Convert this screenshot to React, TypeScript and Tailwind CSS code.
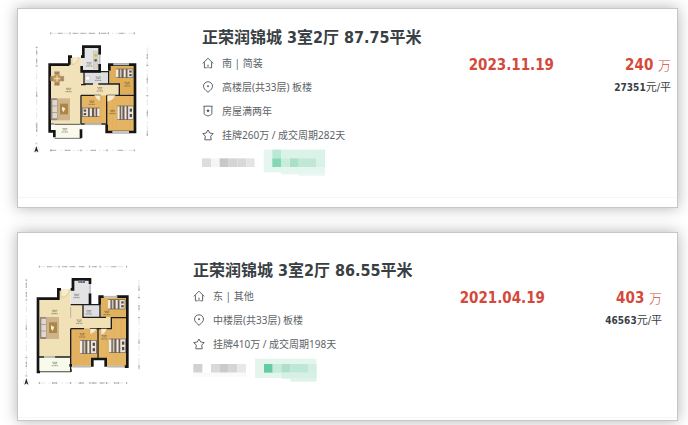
import type { ReactNode } from 'react';

type IconName = 'home' | 'pin' | 'badge' | 'star';
type Block = [number, number, number, number, string];

interface Listing {
  title: string;
  facts: { icon: IconName; text: string }[];
  date: string;
  price: string;
  unitPrice: string;
  plan: ReactNode;
  tags: Block[];
  cardClass: string;
  bodyClass: string;
}

const iconPaths: Record<IconName, ReactNode> = {
  home: <path d="M.8 6.400 6 1.200l5.200 5.200M2.400 5.200v5.600h2.300M9.600 5.200v5.600H7.300M6 7.600v3.600" />,
  pin: (
    <>
      <path d="M6 11.300C3.200 9 1.500 7.300 1.500 5.100a4.500 4.300 0 0 1 9 0C10.500 7.300 8.800 9 6 11.300Z" />
      <circle cx="6" cy="5.200" r=".6" fill="currentColor" />
    </>
  ),
  badge: (
    <>
      <path d="M1.500 1.200h9M2.100 1.200v7.300c0 1.200 1.900 1.600 3.900 2.600 2-1 3.900-1.400 3.900-2.600V1.200" />
      <path d="m6 3.600.6 1.300 1.300.2-1 .9.300 1.300L6 6.700l-1.200.6L5.100 6l-1-.9 1.300-.2Z" fill="currentColor" stroke="none" />
    </>
  ),
  star: <path d="m6 1 1.700 3 3.500.6-2.500 2.500.5 3.700H2.800l.5-3.700L.8 4.600 4.300 4Z" />,
};

function Icon({ name }: { name: IconName }) {
  return (
    <svg viewBox="0 0 12 12" className="size-3 shrink-0" fill="none" stroke="currentColor" strokeWidth="1" strokeLinejoin="round" aria-hidden="true">
      {iconPaths[name]}
    </svg>
  );
}

// Double bed seen from above, head on the left unless flipped
function Bed({ x, y, w, h, flip }: { x: number; y: number; w: number; h: number; flip?: boolean }) {
  return (
    <g transform={flip ? `translate(${x + w} ${y}) scale(-1 1)` : `translate(${x} ${y})`}>
      <rect width={w} height={h} fill="#6a5c50" />
      <rect x="2" y="2" width={w * 0.3} height={h - 4} fill="#e9e4dc" />
      <rect x="5" y={h * 0.2} width={w * 0.14} height={h * 0.22} fill="#554c48" />
      <rect x="5" y={h * 0.58} width={w * 0.14} height={h * 0.22} fill="#554c48" />
      <rect x={w * 0.44} y="2" width={w * 0.12} height={h - 4} fill="#f1ece5" />
      <rect x={w * 0.68} y="2" width={w * 0.1} height={h - 4} fill="#cfc4b8" />
      <rect x={w * 0.86} y="2" width={w * 0.14} height={h - 4} fill="#f1ece5" />
    </g>
  );
}

function Sofa({ x, y }: { x: number; y: number }) {
  return (
    <g transform={`translate(${x} ${y})`}>
      <rect x="18" y="0" width="40" height="66" fill="#cdb48d" />
      <rect width="20" height="66" rx="4" fill="#93857a" />
      <rect x="5" y="5" width="14" height="17" fill="#e0d8cf" />
      <rect x="5" y="24" width="14" height="17" fill="#e0d8cf" />
      <rect x="5" y="43" width="14" height="17" fill="#e0d8cf" />
      <rect x="28" y="16" width="24" height="32" fill="#ad8544" />
      <path d="m34 25 10 5-5 12-5-7Z" fill="#f3ead3" />
    </g>
  );
}

// Room name and area, too small to be read
function RoomMark({ x, y }: { x: number; y: number }) {
  return <path d={`M${x - 8} ${y}h16M${x - 6} ${y + 4}h12M${x - 10} ${y + 10}h20`} stroke="#3a342c" strokeWidth="2" strokeDasharray="4 1" opacity=".7" />;
}

function Compass({ x, y }: { x: number; y: number }) {
  return (
    <g transform={`translate(${x} ${y})`}>
      <circle r="9" fill="none" stroke="#ccc" />
      <path d="M0-11 6 8 0 4-6 8Z" fill="#222" />
      <path d="M-2-16v-5l4 5v-5" stroke="#999" fill="none" />
    </g>
  );
}

function PlanOne() {
  return (
    <svg viewBox="90 84 372 390" className="w-full" role="img" aria-label="户型图">
      <g stroke="#ccc" strokeWidth="1.500" fill="none">
        <path d="M152 100h251M152 451h251M110 142v268M442 142v268" strokeDasharray="18 10 5 6" />
        <path d="M173 100h16M218 100h16M242 100h16M266 100h18M303 100h16M358 100h16M153 451h14M195 451h17M273 451h16M355 451h16M110 152v14M110 176v14M110 277v14M110 374v22M442 162v16M442 233v16M442 332v16M442 394v14" stroke="#aaa" strokeWidth="4" strokeDasharray="3 1" />
        <path d="M152 97v6M210 97v6M298 97v6M325 97v6M403 97v6M152 448v6M243 448v6M321 448v6M403 448v6M107 142h6M107 198h6M107 372h6M439 196h6M439 287h6" stroke="#777" strokeWidth="2" />
      </g>
      <path d="M149 194h60v-22h36v42h84v72h-86v86h-94Z" fill="#f2e2b9" />
      <path d="M243 254h114v31H243Z" fill="#f2e2b9" />
      <path d="M250 140h49v74h-54v-42h5Z" fill="#e4e3e5" />
      <path d="M252 216h74v36h-74Z" fill="#dedee0" />
      <path d="M329 194h76v90h-47v-31h-29Z" fill="#e1ae58" />
      <path d="M320 286h85v108h-85Z" fill="#e4b462" />
      <path d="M244 286h76v84h-76Z" fill="#e6b665" />
      <path d="M162 373h82v40h-82Z" fill="#f9faec" />
      <path d="M338 296v98M350 296v98M390 286v108M256 348v24M304 286v84M390 240v44" stroke="#cf9846" opacity=".4" />
      <path d="M252 215h76M252 216v36h27M295 252h63v33M326 216v36M243 286h58M320 286v106M322 286h82M243 254h14M243 372h76M358 254v32" fill="none" stroke="#1d1d1d" strokeWidth="4" />
      <path d="M164 415h80" stroke="#6e7272" strokeWidth="3" />
      <path d="M149 372h14M164 373h78" stroke="#555" strokeWidth="3" />
      <path d="M243 170h7v-30h49v24M299 192v22h-54v-16M208 194v-24h8M208 194h-59v200h14v18M328 212v-18h77v202h-85v-22M243 388v26" fill="none" stroke="#151515" strokeWidth="8" />
      <path d="M243 286v86" stroke="#1d1d1d" strokeWidth="4" />
      <path d="M299 164v28M340 193h47M337 396h50M254 373h50" stroke="#d5d5d5" strokeWidth="6" />
      <path d="M299 164v28M340 193h47M337 396h50M254 373h50" stroke="#777" strokeWidth="1" />
      <path d="M216 172v22q18-4 20-22M301 286v18q-12-3-18-18M322 286v19q19-2 24-19" fill="#f7ebcb" stroke="#b99761" />
      <rect x="280" y="155" width="13" height="50" fill="#d9d4bd" stroke="#aaa" />
      <circle cx="287" cy="166" r="4" fill="#d8b847" />
      <circle cx="287" cy="181" r="4" fill="#5d6158" />
      <path d="M257 229h12v11h-12Z" fill="#fff" stroke="#aaa" />
      <g fill="#c89a55" stroke="#8d7143">
        <circle cx="171" cy="236" r="13" />
        <path d="M164 215h14v7h-14ZM164 249h14v7h-14ZM151 229h7v14h-7ZM184 229h7v14h-7Z" fill="#9a8970" />
      </g>
      <path d="M171 227v18M162 236h18" stroke="#eee2c7" strokeWidth="3" />
      <Sofa x={152} y={295} />
      <Bed x={348} y={206} w={52} h={28} flip />
      <Bed x={352} y={317} w={49} h={43} flip />
      <Bed x={246} y={323} w={53} h={28} />
      <RoomMark x={206} y={265} />
      <RoomMark x={268} y={188} />
      <RoomMark x={295} y={231} />
      <RoomMark x={300} y={263} />
      <RoomMark x={276} y={303} />
      <RoomMark x={338} y={331} />
      <RoomMark x={382} y={248} />
      <RoomMark x={195} y={386} />
      <Compass x={109} y={449} />
    </svg>
  );
}

function PlanTwo() {
  return (
    <svg viewBox="63 123 372 390" className="w-full" role="img" aria-label="户型图">
      <g stroke="#ccc" strokeWidth="1.500" fill="none">
        <path d="M118 140h262M118 489h262M79 180v290M417 180v270" strokeDasharray="18 10 5 6" />
        <path d="M141 140h14M187 140h14M211 140h14M238 140h16M277 140h14M334 140h16M156 489h16M236 489h16M275 489h14M299 489h14M342 489h16M79 189v14M79 216v14M79 316v16M79 426v16M417 199v14M417 255v14M417 358v14M417 434v14" stroke="#aaa" strokeWidth="4" strokeDasharray="3 1" />
        <path d="M118 137v6M177 137v6M269 137v6M300 137v6M380 137v6M118 486v6M212 486v6M270 486v6M320 486v6M380 486v6M76 180h6M76 240h6M76 412h6M414 233h6M414 293h6" stroke="#777" strokeWidth="2" />
      </g>
      <path d="M115 236h61v-28h36v46h37v38h84v33H212v85h-97Z" fill="#f1e1b7" />
      <path d="M213 178h56v75h-56Z" fill="#e3e2e4" />
      <path d="M250 255h50v37h-50Z" fill="#dedddf" />
      <path d="M302 231h79v61h-79Z" fill="#e2b15d" />
      <path d="M333 292h48v147h-64v-23h-23v-91h39Z" fill="#e4b565" />
      <path d="M212 325h81v91h-16v23h-65Z" fill="#e3b260" />
      <path d="M118 411h95v44h-95Z" fill="#f8faeb" />
      <path d="M228 328v112M254 405v35M343 298v52M363 294v60M320 328v88M350 402v36" stroke="#cf9846" opacity=".4" />
      <path d="M212 254h37v38h52M249 254h51M300 254v38h18M212 326h40M270 326h24v90M294 326h40v-33h46M212 326v84M116 411h16M165 411h48" fill="none" stroke="#1d1d1d" strokeWidth="4" />
      <path d="M118 455h95" stroke="#6e7272" strokeWidth="4" />
      <path d="M132 411h34" stroke="#888" strokeWidth="3" />
      <path d="M212 208h7v-30h51v14M270 220v34M183 208h-8v28h-61v220h6M299 254v-24h12M350 230h32v210h-8M212 432v8M211 452h4M277 440v-23h40v23" fill="none" stroke="#151515" strokeWidth="8" />
      <path d="M212 412v40" stroke="#1d1d1d" strokeWidth="4" />
      <path d="M270 192v28M312 230h40M217 440h56M322 440h50" stroke="#d5d5d5" strokeWidth="6" />
      <path d="M270 192v28M312 230h40M217 440h56M322 440h50" stroke="#777" strokeWidth="1" />
      <path d="M183 208v24q23-2 26-24M270 326v16q15-3 20-16M303 326v18q13-2 18-18" fill="#f7ebcb" stroke="#b99761" />
      <path d="M212 260v34" stroke="#b5b5b5" strokeWidth="3" />
      <rect x="235" y="181" width="20" height="8" fill="#5d6b80" />
      <path d="M240 182v6M248 182v6" stroke="#c9d1dd" strokeWidth="2" />
      <Sofa x={119} y={291} />
      <Bed x={324} y={238} w={52} h={30} flip />
      <Bed x={240} y={360} w={50} h={42} flip />
      <Bed x={327} y={356} w={51} h={43} flip />
      <RoomMark x={164} y={271} />
      <RoomMark x={230} y={223} />
      <RoomMark x={267} y={272} />
      <RoomMark x={238} y={300} />
      <RoomMark x={321} y={274} />
      <RoomMark x={247} y={341} />
      <RoomMark x={313} y={347} />
      <RoomMark x={165} y={427} />
      <Compass x={79} y={486} />
    </svg>
  );
}

const listings: Listing[] = [
  {
    title: '正荣润锦城 3室2厅 87.75平米',
    facts: [
      { icon: 'home', text: '南 | 简装' },
      { icon: 'pin', text: '高楼层(共33层) 板楼' },
      { icon: 'badge', text: '房屋满两年' },
      { icon: 'star', text: '挂牌260万 / 成交周期282天' },
    ],
    date: '2023.11.19',
    price: '240',
    unitPrice: '27351',
    plan: <PlanOne />,
    tags: [
      [0, 28, 27, 26, '#dcdddd'],
      [27, 28, 26, 26, '#f5f5f5'],
      [53, 28, 27, 26, '#c9c7c8'],
      [80, 28, 26, 26, '#d6d4d4'],
      [106, 28, 27, 26, '#d9d8d9'],
      [133, 28, 25, 26, '#e4e4e6'],
      [185, 2, 184, 68, '#e5f6ee'],
      [237, 2, 132, 26, '#daf2e8'],
      [211, 2, 26, 26, '#b9e9d4'],
      [211, 28, 26, 26, '#86d7b4'],
      [237, 28, 27, 26, '#c9eddc'],
      [264, 28, 26, 26, '#acdfc8'],
      [290, 28, 53, 26, '#c1e8d7'],
      [343, 28, 26, 26, '#d8f2e6'],
      [237, 54, 132, 22, '#e4f6ee'],
      [290, 70, 79, 10, '#e8f7f1'],
    ],
    cardClass: 'pb-[9px]',
    bodyClass: 'pt-4 pb-[21px] pl-3 pr-[6px]',
  },
  {
    title: '正荣润锦城 3室2厅 86.55平米',
    facts: [
      { icon: 'home', text: '东 | 其他' },
      { icon: 'pin', text: '中楼层(共33层) 板楼' },
      { icon: 'star', text: '挂牌410万 / 成交周期198天' },
    ],
    date: '2021.04.19',
    price: '403',
    unitPrice: '46563',
    plan: <PlanTwo />,
    tags: [
      [1, 18, 27, 26, '#cfd1d2'],
      [54, 18, 27, 26, '#dad9d9'],
      [81, 18, 26, 26, '#cbcacb'],
      [107, 18, 26, 26, '#d6d5d6'],
      [133, 18, 26, 26, '#e8e8ea'],
      [1, 44, 158, 12, '#fafafa'],
      [186, 2, 184, 58, '#e3f5ed'],
      [213, 18, 26, 26, '#65cba1'],
      [239, 18, 27, 26, '#c5ebda'],
      [266, 18, 26, 26, '#addfca'],
      [292, 18, 53, 26, '#bfe7d7'],
      [345, 18, 26, 26, '#d3efe3'],
      [266, 44, 105, 18, '#d6f0e6'],
      [292, 62, 79, 9, '#def3eb'],
    ],
    cardClass: 'pb-[2px]',
    bodyClass: 'pt-[25px] pb-[26px] pl-[3px] pr-[15px]',
  },
];

function ListingCard({ item }: { item: Listing }) {
  return (
    <article className={`border border-[#c6c6c6] bg-white shadow-[0_0_14px_rgba(0,0,0,0.3)] ${item.cardClass}`}>
      <div className={`flex items-start border-b border-[#f6f6f6] ${item.bodyClass}`}>
        <div className="mt-[3px] mr-12 w-[124px] shrink-0">{item.plan}</div>

        <div className="min-w-0 flex-1">
          <h2 className="font-['DejaVu_Sans_Condensed','Noto_Sans_CJK_SC',sans-serif] text-base leading-[25px] font-bold whitespace-nowrap text-[#394043]">
            {item.title}
          </h2>
          <ul className="pt-px text-[10px] leading-6 text-[#5e6366]">
            {item.facts.map((fact) => (
              <li key={fact.icon} className="flex items-center gap-2 whitespace-nowrap">
                <Icon name={fact.icon} />
                {fact.text}
              </li>
            ))}
          </ul>
          <svg viewBox="0 0 372 81" className="mt-[2px] w-[124px]" aria-hidden="true">
            {item.tags.map(([x, y, w, h, fill]) => (
              <rect key={`${x}-${y}`} x={x} y={y} width={w} height={h} fill={fill} />
            ))}
          </svg>
        </div>

        <div className="mt-7 flex shrink-0 items-start font-['DejaVu_Sans_Condensed','Noto_Sans_CJK_SC',sans-serif]">
          <time className="text-[15px] leading-6 font-bold text-[#d5493b]">{item.date}</time>
          <div className="w-[117px] text-right">
            <p className="text-[15px] leading-6 font-bold text-[#d5493b]">
              {item.price} <span className="font-['Noto_Sans_CJK_SC',sans-serif] text-[13px] font-light">万</span>
            </p>
            <p className="text-[10px] leading-[22px] font-bold text-[#394043]">
              {item.unitPrice}
              <span className="text-[11px] font-normal">元/平</span>
            </p>
          </div>
        </div>
      </div>
    </article>
  );
}

export default function App() {
  return (
    <main className="flex flex-col gap-6 bg-white pt-2 pr-[10px] pb-1 pl-[17px] font-['Noto_Sans','Noto_Sans_CJK_SC',sans-serif]">
      {listings.map((item) => (
        <ListingCard key={item.title} item={item} />
      ))}
    </main>
  );
}
